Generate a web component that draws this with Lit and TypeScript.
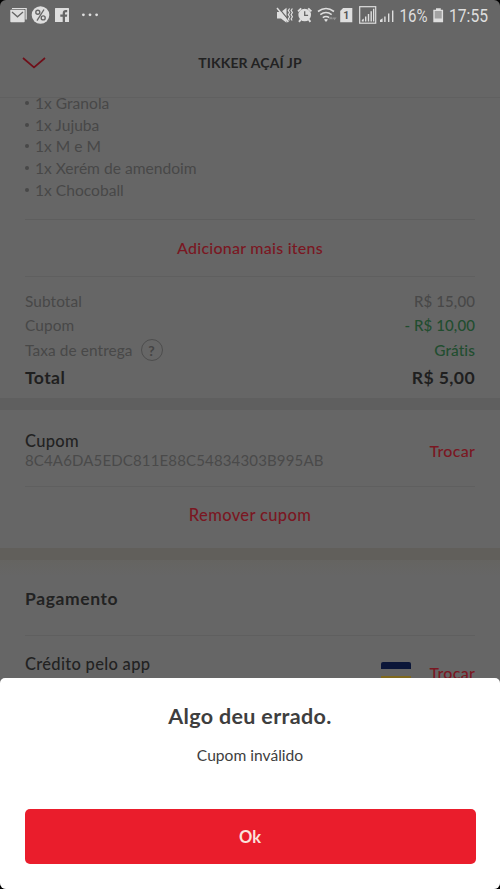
import { LitElement, html, css } from "lit";
import { customElement } from "lit/decorators.js";

@customElement("status-bar")
export class StatusBar extends LitElement {
  static styles = css`
    :host { display: block; height: 31px; }
    svg { display: block; }
    text { font-family: Roboto, sans-serif; font-size: 18px; fill: #dedede; }
    .sim { font-size: 10.500px; font-weight: 700; fill: #555; }
  `;
  render() {
    return html`
      <svg width="500" height="31" viewBox="0 0 500 31" fill="#dedede" stroke="none">
        <path d="M12 8h14.800v11.500h-1.300V9H12z"/>
        <rect x="10.300" y="9.700" width="14.400" height="12.500" rx=".8"/>
        <path d="M12 12l5.500 4.800L23 12" fill="none" stroke="#666" stroke-width="1.300"/>
        <circle cx="40.500" cy="15" r="8.800"/>
        <g fill="none" stroke="#666" stroke-width="1.400">
          <circle cx="37.800" cy="12.300" r="2"/><circle cx="43.200" cy="17.900" r="2"/>
          <path d="M44 9.500L37 20.700"/>
        </g>
        <rect x="55" y="8" width="14" height="14" rx=".6"/>
        <path d="M62.700 22v-5.200h-2.400v-2.200h2.400v-1.400c0-2.100 1.200-3.200 3-3.200h1.500v2.200h-1c-1 0-1.200.4-1.200 1.200v1.200h2.200l-.3 2.200H65V22z" fill="#666"/>
        <circle cx="83.400" cy="14.800" r="1.400"/><circle cx="90" cy="14.800" r="1.400"/><circle cx="96.600" cy="14.800" r="1.400"/>

        <path d="M277 12h4l5.500-4.200v15L281 18.500h-4z"/>
        <path d="M278.300 7.500l10.700 13" stroke="#666" stroke-width="1.200"/>
        <path d="M277 8l11.300 14" stroke="#dedede" stroke-width="1.500"/>
        <path d="M289.600 8.500l-1.300 2 1.300 2-1.300 2.200 1.300 2-1.300 2.200 1 1.600M292.400 8.500l-1.300 2 1.300 2-1.300 2.200 1.300 2-1.300 2.200 1 1.600" fill="none" stroke="#dedede" stroke-width="1.200"/>

        <circle cx="304.700" cy="15" r="6.300"/>
        <path d="M298 11.400l3.200-3M311.400 11.400l-3.200-3M300.700 19.500l-1.700 2.400M308.700 19.500l1.700 2.400" stroke="#dedede" stroke-width="1.900"/>
        <path d="M304.700 11.200v4.200h3.400" fill="none" stroke="#666" stroke-width="1.300"/>

        <g fill="none" stroke="#dedede" stroke-width="1.600">
          <path d="M318 11.500q8-6 16 0M320.300 14.700q5.700-4.400 11.400 0M322.800 17.700q3.200-2.500 6.400 0"/>
        </g>
        <path d="M324 19.500q2-1.200 4 0l-2 2.500z"/>
        <path d="M331 16.500l2.200 2.800h-4.400zM334.500 20.300l-2.200-2.800h4.400z" fill="#929292"/>

        <path d="M340.200 11l2.900-3h9.200v14.200h-12.100z"/>
        <text class="sim" x="343.300" y="18.800">1</text>

        <rect x="359.700" y="6.700" width="16" height="16.500" fill="none" stroke="#dedede" stroke-width="1.200"/>
        <path d="M361.800 21.500v-1.600l2-1.500v3.100zM365 21.500v-5h1.400v5zM367.800 21.500v-7.500h1.400v7.500zM370.500 21.500V11.300h1.400v10.200zM373 21.500V8.700h1.300v12.800z"/>
        <path d="M380 22v-2l2.600-1.800V22zM384.200 22v-5.400h1.400V22zM388 22v-8.400h1.400V22zM392 22V10.400h1.400V22z"/>

        <text x="399.500" y="22" textLength="28" lengthAdjust="spacingAndGlyphs">16%</text>
        <path d="M436 8.200h4.800v1.500h2.300v12.500h-9.800V9.700h2.700z"/>
        <rect x="434.700" y="11" width="7" height="7.500" fill="#a2a2a2"/>
        <text x="449" y="22" textLength="39" lengthAdjust="spacingAndGlyphs">17:55</text>
      </svg>
    `;
  }
}

@customElement("error-sheet")
export class ErrorSheet extends LitElement {
  static styles = css`
    :host {
      display: flex; flex-direction: column; align-items: center; box-sizing: border-box;
      height: 211px; padding: 22px 24.500px 25px; background: #fff; color: #3e3e3e;
      border-radius: 5px 5px 0 0;
    }
    h2 { margin: 0; font-size: 21.500px; line-height: 32px; font-weight: 700; letter-spacing: .35px; }
    p { margin: 11px 0 0; font-size: 15.600px; line-height: 24px; }
    button {
      width: 451px; height: 55px; margin-top: auto; padding: 0; border: 0; border-radius: 5px;
      background: #ea1d2c; color: #fbe3dc; font: 700 16.500px Lato, sans-serif;
    }
  `;
  render() {
    return html`<h2>Algo deu errado.</h2><p>Cupom inválido</p><button>Ok</button>`;
  }
}

@customElement("app-root")
export class AppRoot extends LitElement {
  static styles = css`
    :host { display: block; width: 500px; height: 889px; background: #000; font-family: Lato, sans-serif; }
    .screen {
      position: relative; display: flex; flex-direction: column; height: 889px; overflow: hidden;
      border-radius: 6px; background: #666; color: #222;
    }
    header {
      display: grid; grid-template-columns: 44px 1fr 44px; align-items: center; box-sizing: border-box;
      height: 67px; padding: 0 12px 2px; border-bottom: 1px solid #606060;
    }
    header svg { justify-self: center; }
    h1 { margin: 0; text-align: center; font-size: 14px; line-height: 18px; font-weight: 700; letter-spacing: .1px; }
    section { padding: 0 25px; }
    .order { height: 300px; overflow: hidden; }
    ul { list-style: none; margin: -6px 0 0; padding: 0 0 18px; border-bottom: 1px solid #5e5e5e; }
    li { display: flex; align-items: center; gap: 6px; height: 21.750px; font-size: 15.600px; color: #484848; }
    li::before { content: ""; width: 4px; height: 4px; border-radius: 50%; background: #484848; }
    .link { color: #7a1722; font-size: 16px; font-weight: 500; letter-spacing: .25px; }
    .add { display: flex; justify-content: center; align-items: center; height: 56px; border-bottom: 1px solid #5f5f5f; }
    .totals { padding-top: 12px; }
    .row { display: flex; align-items: center; justify-content: space-between; height: 24px; font-size: 15.400px; color: #484848; letter-spacing: .1px; }
    .fee { height: 27px; }
    .fee span { display: flex; align-items: center; gap: 8px; }
    .help { display: grid; place-items: center; width: 20px; height: 20px; border: 1px solid #4d4d4d; border-radius: 50%; font: 700 14px Lato, sans-serif; color: #444; }
    .amount { font-size: 15px; font-weight: 500; }
    .green { color: #214d2f; font-weight: 500; }
    .total { height: 28px; font-size: 17.600px; font-weight: 700; letter-spacing: .4px; color: #1f1f1f; }
    .band { height: 12px; background: #5f5f5f; }
    .coupon { height: 138px; }
    .entry { display: flex; align-items: center; justify-content: space-between; }
    .coupon .entry { box-sizing: border-box; height: 77px; padding-top: 4px; border-bottom: 1px solid #5f5f5f; }
    .name { font-size: 16.500px; line-height: 20px; font-weight: 500; letter-spacing: .3px; color: #222; }
    .code { font-size: 15px; line-height: 18px; letter-spacing: .15px; color: #4a4a4a; }
    .remove { display: flex; justify-content: center; align-items: center; height: 56px; font-size: 16.500px; letter-spacing: .35px; }
    .warm { background: #615f5b; }
    .payment { flex: 1; background: linear-gradient(#656461, #666 16px); }
    h3 { box-sizing: border-box; height: 76px; margin: 0; padding-top: 28px; font-size: 17.500px; line-height: 22px; font-weight: 700; letter-spacing: .6px; border-bottom: 1px solid #5f5f5f; }
    .payment .entry { padding-top: 18px; align-items: flex-start; }
    .method { display: flex; align-items: center; gap: 19px; padding-top: 8px; }
    .card { display: block; width: 30px; height: 20px; border-radius: 2px; background: linear-gradient(#0b1638 0 7px, #666 7px 14px, #7f681d 14px); }
    .overlay { position: absolute; left: 0; right: 0; bottom: 0; }
  `;

  items = ["1x Granola", "1x Jujuba", "1x M e M", "1x Xerém de amendoim", "1x Chocoball"];

  render() {
    return html`
      <div class="screen">
        <status-bar></status-bar>
        <header>
          <svg width="26" height="14" viewBox="0 0 26 14" fill="none" stroke="#6f0f19" stroke-width="1.700"><path d="M2 2l11 9.300L24 2"/></svg>
          <h1>TIKKER AÇAÍ JP</h1>
        </header>
        <section class="order">
          <ul>${this.items.map((item) => html`<li>${item}</li>`)}</ul>
          <div class="link add">Adicionar mais itens</div>
          <div class="totals">
            <div class="row"><span>Subtotal</span><span class="amount">R$ 15,00</span></div>
            <div class="row"><span>Cupom</span><span class="amount green">- R$ 10,00</span></div>
            <div class="row fee"><span>Taxa de entrega <i class="help">?</i></span><b class="green">Grátis</b></div>
            <div class="row total"><span>Total</span><span>R$ 5,00</span></div>
          </div>
        </section>
        <div class="band"></div>
        <section class="coupon">
          <div class="entry">
            <div><div class="name">Cupom</div><div class="code">8C4A6DA5EDC811E88C54834303B995AB</div></div>
            <div class="link">Trocar</div>
          </div>
          <div class="link remove">Remover cupom</div>
        </section>
        <div class="band warm"></div>
        <section class="payment">
          <h3>Pagamento</h3>
          <div class="entry">
            <div><div class="name">Crédito pelo app</div><div class="code">VISA •••• 4943</div></div>
            <div class="method"><i class="card"></i><div class="link">Trocar</div></div>
          </div>
        </section>
        <error-sheet class="overlay"></error-sheet>
      </div>
    `;
  }
}
